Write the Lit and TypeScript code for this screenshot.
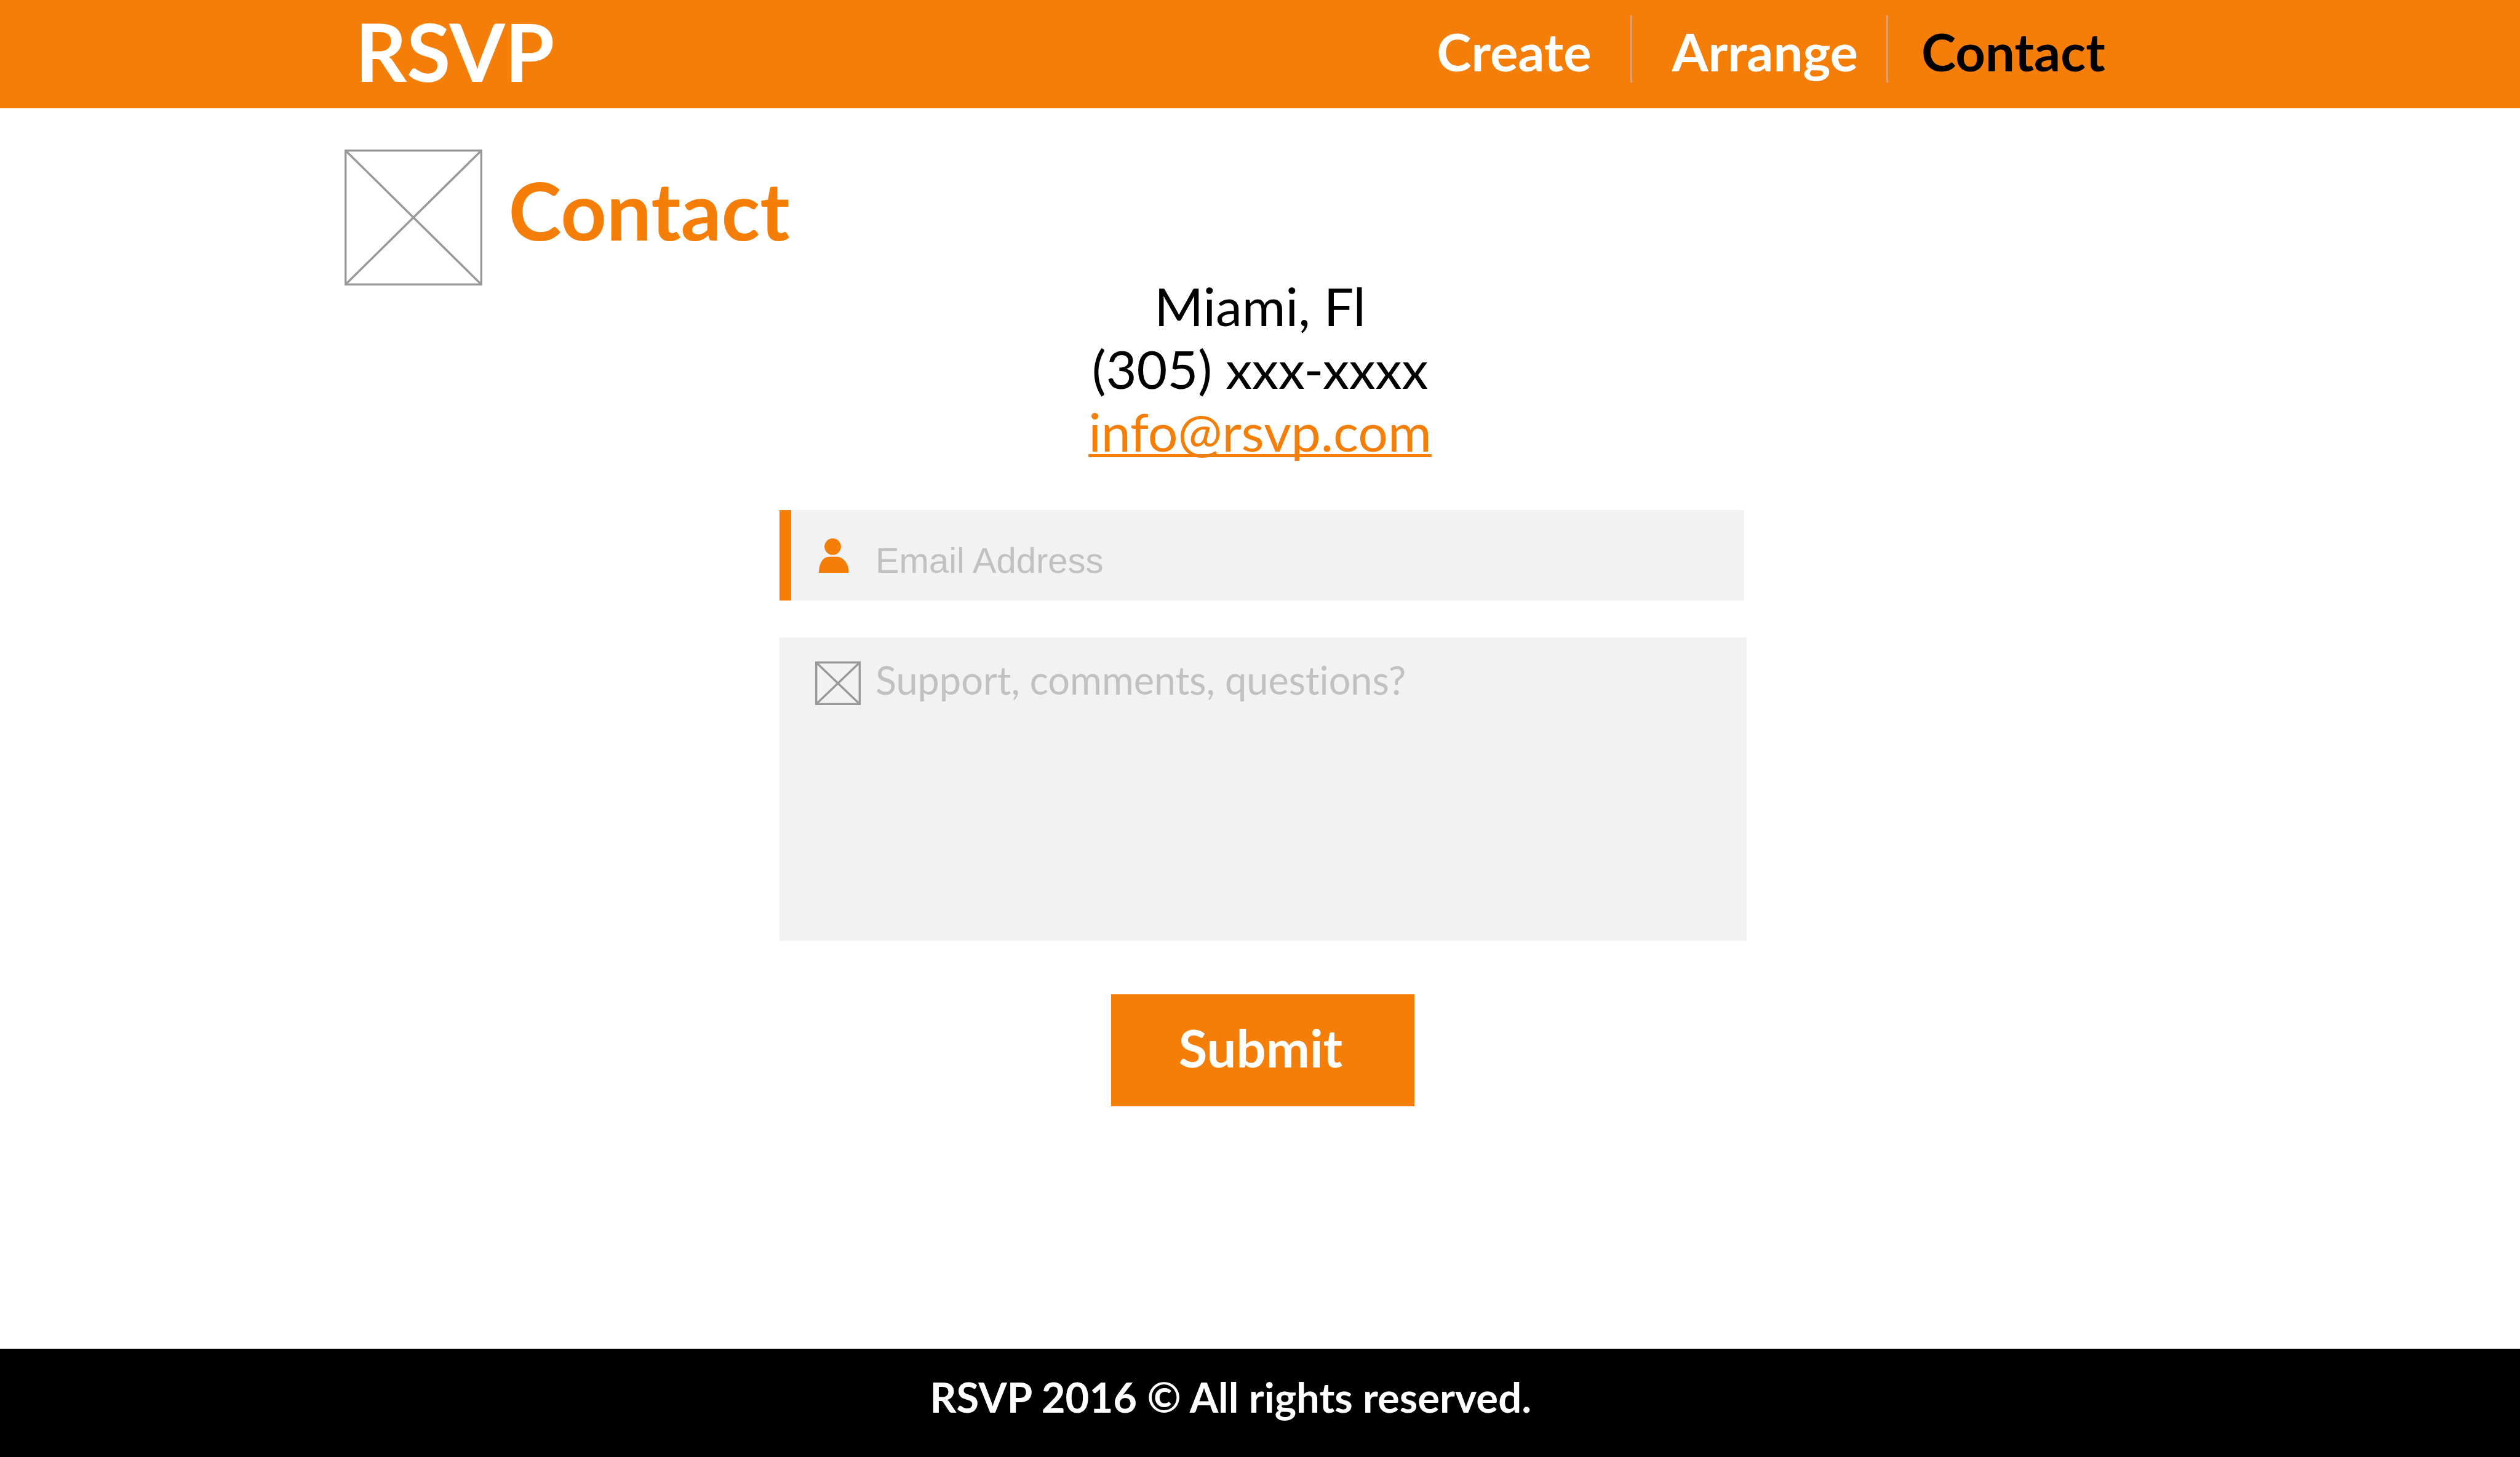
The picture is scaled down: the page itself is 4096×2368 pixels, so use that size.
import { LitElement, html, css, svg } from "lit";
import { customElement } from "lit/decorators.js";

interface NavItem {
  label: string;
  href: string;
  current?: boolean;
}

const NAV: NavItem[] = [
  { label: "Create", href: "#create" },
  { label: "Arrange", href: "#arrange" },
  { label: "Contact", href: "#contact", current: true },
];

/** Image placeholder: an outlined box with both diagonals. */
const crossedBox = (w: number, h: number) => svg`
  <rect x="1.7" y="1.7" width=${w - 3.4} height=${h - 3.4}></rect>
  <path d="M1.7 1.7 L${w - 1.7} ${h - 1.7} M${w - 1.7} 1.7 L1.7 ${h - 1.7}"></path>`;

@customElement("rsvp-header")
export class RsvpHeader extends LitElement {
  static styles = css`
    :host {
      display: block;
    }
    .bar {
      display: flex;
      justify-content: space-between;
      align-items: flex-start;
      box-sizing: border-box;
      height: 176px;
      padding: 0 16.46% 0 14.1%;
      background: #f57e08;
    }
    .brand {
      font-size: 130px;
      font-weight: 700;
      line-height: 166px;
      color: #fff;
      text-decoration: none;
    }
    .links {
      display: flex;
      margin: 25px 0 0;
      padding: 0;
      list-style: none;
    }
    .item + .item {
      border-left: 3px solid #e8a067;
    }
    .link {
      display: block;
      padding: 8px 46px 0 65px;
      font-size: 85px;
      font-weight: 700;
      line-height: 101px;
      color: #fff;
      text-decoration: none;
    }
    .item:first-child .link {
      padding-right: 63px;
    }
    .item:last-child .link {
      padding-left: 54px;
      padding-right: 0;
    }
    .link.current {
      color: #000;
    }
  `;

  render() {
    return html`
      <header class="bar">
        <a class="brand" href="#home">RSVP</a>
        <nav>
          <ul class="links">
            ${NAV.map(
              (n) => html`<li class="item">
                <a
                  class="link ${n.current ? "current" : ""}"
                  href=${n.href}
                  aria-current=${n.current ? "page" : "false"}
                  >${n.label}</a
                >
              </li>`
            )}
          </ul>
        </nav>
      </header>
    `;
  }
}

@customElement("contact-form")
export class ContactForm extends LitElement {
  static styles = css`
    :host {
      display: block;
    }
    .form {
      display: flex;
      flex-direction: column;
    }
    .field {
      display: flex;
      box-sizing: border-box;
      background: #f2f2f2;
    }
    .label {
      display: flex;
      flex: none;
    }
    .email {
      align-items: center;
      height: 147px;
      margin-right: 4px;
      border-left: 19px solid #f57e08;
      padding-left: 45px;
    }
    .message {
      align-items: flex-start;
      height: 493px;
      margin-top: 60px;
      padding-left: 58px;
    }
    .person {
      width: 49px;
      height: 56px;
      fill: #f57e08;
    }
    .placeholder-icon {
      width: 74px;
      height: 71px;
      margin-top: 39px;
      fill: none;
      stroke: #999;
      stroke-width: 3.4;
    }
    .control {
      flex: 1;
      min-width: 0;
      box-sizing: border-box;
      border: 0;
      margin: 0;
      background: none;
      color: #333;
      outline: none;
    }
    .control::placeholder {
      color: #c1c1c1;
      opacity: 1;
    }
    .email .control {
      height: 100%;
      padding: 15px 24px 0 43px;
      font-family: "Liberation Sans", Arial, sans-serif;
      font-size: 58px;
    }
    .message .control {
      align-self: stretch;
      padding: 31px 24px 24px 24px;
      font-family: Lato, sans-serif;
      font-size: 63px;
      font-variant-ligatures: none;
      line-height: 76px;
      resize: none;
    }
    .submit {
      align-self: center;
      width: 493px;
      height: 182px;
      margin: 87px 0 0;
      border: 0;
      padding: 0 8px 10px 0;
      background: #f57e08;
      color: #fff;
      font-family: Lato, sans-serif;
      font-size: 85px;
      font-weight: 700;
      cursor: pointer;
    }
  `;

  render() {
    return html`
      <form class="form" @submit=${(e: Event) => e.preventDefault()}>
        <div class="field email">
          <label class="label" for="email" aria-label="Email address">
            <svg class="person" viewBox="0 0 49 56">
              <circle cx="22.5" cy="13.4" r="13.4"></circle>
              <path d="M0 56 C0 41 6.5 29.8 17 29.8 H30 C41 31 48.6 42 48.6 56 Z"></path>
            </svg>
          </label>
          <input class="control" id="email" type="email" placeholder="Email Address" />
        </div>
        <div class="field message">
          <label class="label" for="message" aria-label="Message">
            <svg class="placeholder-icon" viewBox="0 0 74 71">${crossedBox(74, 71)}</svg>
          </label>
          <textarea class="control" id="message" placeholder="Support, comments, questions?"></textarea>
        </div>
        <button class="submit" type="submit">Submit</button>
      </form>
    `;
  }
}

@customElement("app-root")
export class AppRoot extends LitElement {
  static styles = css`
    :host {
      display: flex;
      flex-direction: column;
      min-height: 100vh;
      background: #fff;
      color: #000;
      font-family: Lato, sans-serif;
    }
    .main {
      flex: 1;
      padding: 67px 0 120px;
    }
    .heading {
      display: flex;
      align-items: flex-start;
      gap: 43px;
      margin-left: 13.66%;
    }
    .logo {
      flex: none;
      width: 224px;
      height: 221px;
      fill: none;
      stroke: #999;
      stroke-width: 3.4;
    }
    .title {
      margin: 0;
      font-size: 130px;
      font-weight: 700;
      line-height: 196px;
      color: #f57e08;
    }
    .address {
      margin-top: -18px;
      font-size: 86px;
      font-style: normal;
      line-height: 102px;
      text-align: center;
    }
    .line {
      margin: 0;
    }
    .mail {
      color: #f57e08;
      text-decoration: underline;
      text-decoration-thickness: 5px;
      text-decoration-skip-ink: none;
      text-underline-offset: 4px;
    }
    .form {
      width: 38.38%;
      margin: 77px 0 0 30.93%;
    }
    .footer {
      height: 176px;
      box-sizing: border-box;
      padding-left: 36.9%;
      background: #000;
      color: #fff;
      font-size: 67px;
      font-weight: 700;
      line-height: 156px;
    }
  `;

  render() {
    return html`
      <rsvp-header></rsvp-header>
      <main class="main">
        <div class="heading">
          <svg class="logo" viewBox="0 0 224 221" aria-hidden="true">${crossedBox(224, 221)}</svg>
          <h1 class="title">Contact</h1>
        </div>
        <address class="address">
          <p class="line">Miami, Fl</p>
          <p class="line">(305) xxx-xxxx</p>
          <p class="line"><a class="mail" href="mailto:info@rsvp.com">info@rsvp.com</a></p>
        </address>
        <contact-form class="form"></contact-form>
      </main>
      <footer class="footer">RSVP 2016 © All rights reserved.</footer>
    `;
  }
}
